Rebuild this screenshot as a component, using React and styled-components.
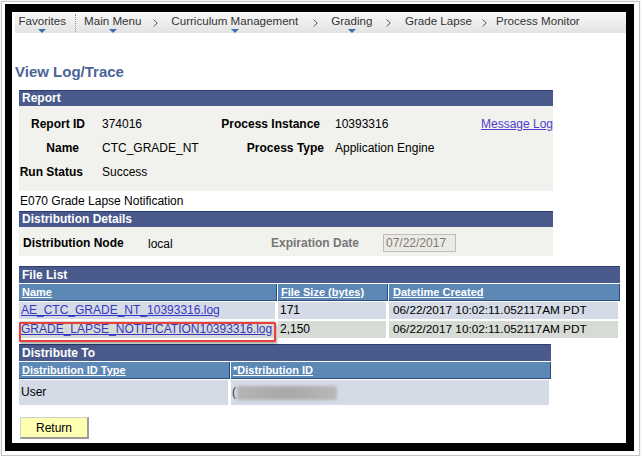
import React from 'react';
import styled, { createGlobalStyle } from 'styled-components';

const Global = createGlobalStyle`
  html, body { margin: 0; padding: 0; background: #fff; }
  body { font-family: "Liberation Sans", Arial, sans-serif; color: #000; }
  * { box-sizing: border-box; }
`;

const Frame = styled.div`
  margin: 1px 0 0 1px;
  width: 639px;
  height: 455px;
  border: 1px solid #c4c4c4;
  box-shadow: 0 0 2px rgba(0, 0, 0, 0.15);
  padding: 2px 5px 4px 3px;
  background: #fff;
  display: flex;
`;

const Screen = styled.div`
  flex: 1;
  border-style: solid;
  border-color: #000;
  border-width: 8px 8px 8px 7px;
  background: #fff;
  display: flex;
  flex-direction: column;
  overflow: hidden;
`;

const Nav = styled.nav`
  margin: 1px 0 0 3px;
  height: 20px;
  flex: none;
  background: linear-gradient(#f7f7f7, #e3e3e3);
  display: flex;
  align-items: flex-start;
  font-size: 11.6px;
  color: #333;
`;

const Crumb = styled.div`
  margin-left: ${(p) => p.$ml}px;
  display: flex;
  flex-direction: column;
  align-items: center;
  padding-top: 1px;
  line-height: 14px;
  white-space: nowrap;
`;

const Caret = styled.span`
  margin-top: 1px;
  width: 0;
  height: 0;
  border-left: 4px solid transparent;
  border-right: 4px solid transparent;
  border-top: 4px solid ${(p) => (p.$show ? '#3b6db3' : 'transparent')};
`;

const DotSep = styled.span`
  margin-left: ${(p) => p.$ml}px;
  height: 18px;
  margin-top: 1px;
  border-left: 1px dotted #9a9a9a;
`;

const ChevWrap = styled.span`
  margin-left: ${(p) => p.$ml}px;
  margin-top: 6px;
  display: flex;
`;

const Chevron = ({ ml }) => (
  <ChevWrap $ml={ml}>
    <svg width="5" height="8" viewBox="0 0 5 8">
      <path d="M0.6 0.6 L4.3 4 L0.6 7.4" fill="none" stroke="#555" strokeWidth="1" />
    </svg>
  </ChevWrap>
);

const Title = styled.h1`
  margin: 30px 0 0 3px;
  font-size: 15px;
  line-height: 18px;
  font-weight: bold;
  color: #4b6497;
`;

const Page = styled.div`
  margin: 9px 0 0 7px;
  display: flex;
  flex-direction: column;
  align-items: flex-start;
`;

const SectionHeader = styled.div`
  width: ${(p) => p.$w}px;
  height: ${(p) => p.$h}px;
  flex: none;
  background: #4a5a8c;
  border-top: 1px solid #2d3d70;
  color: #fff;
  font-weight: bold;
  font-size: 12px;
  line-height: ${(p) => p.$h - 1}px;
  padding-left: 3px;
  grid-column: 1 / -1;
`;

const ReportBody = styled.div`
  width: 534px;
  background: #f1f2ee;
  padding: 6px 0 7px;
  display: grid;
  grid-template-columns: 66px 130px 109px 157px 72px;
  grid-auto-rows: 24px;
  align-items: center;
  font-size: 12px;
`;

const Label = styled.span`
  font-weight: bold;
  text-align: right;
  white-space: nowrap;
  padding-right: ${(p) => p.$pr || 0}px;
  color: ${(p) => (p.$muted ? '#777' : '#000')};
`;

const Value = styled.span`
  white-space: nowrap;
  padding-left: ${(p) => p.$pl || 0}px;
`;

const Link = styled.a`
  color: ${(p) => p.$c || '#3636c4'};
  text-decoration: underline;
  white-space: nowrap;
  cursor: pointer;
`;

const Desc = styled.div`
  height: 20px;
  line-height: 21px;
  font-size: 12px;
  padding-left: 1px;
`;

const DistBody = styled.div`
  width: 534px;
  height: 29px;
  background: #f1f2ee;
  display: flex;
  align-items: center;
  padding: 3px 0 0 4px;
  font-size: 12px;
`;

const Slot = styled.span`
  width: ${(p) => p.$w}px;
  flex: none;
  white-space: nowrap;
  font-weight: ${(p) => (p.$bold ? 'bold' : 'normal')};
  color: ${(p) => (p.$muted ? '#777' : '#000')};
  margin-top: ${(p) => p.$mt || 0}px;
`;

const DateBox = styled.span`
  width: 73px;
  height: 18px;
  background: #edeae3;
  border: 1px solid #bdbdbd;
  color: #7c7c7c;
  font-size: 12px;
  line-height: 16px;
  padding-left: 2px;
`;

const Grid = styled.div`
  margin-top: ${(p) => p.$mt}px;
  display: grid;
  grid-template-columns: ${(p) => p.$cols};
  column-gap: 1px;
  row-gap: 1px;
  background: #fff;
`;

const ColHead = styled.div`
  height: 17px;
  background: #5b88b5;
  border-right: 1px solid #2b4a7c;
  border-bottom: 1px solid #2b4a7c;
  color: #fff;
  font-weight: bold;
  font-size: 11px;
  line-height: 16px;
  text-decoration: underline;
  padding-left: ${(p) => p.$pl || 3}px;
  white-space: nowrap;
`;

const Cell = styled.div`
  position: relative;
  height: ${(p) => p.$h || 18}px;
  background: ${(p) => (p.$alt ? '#d6dbd6' : '#d4dae6')};
  border-right: 2px solid #fff;
  border-bottom: 1px solid #fff;
  font-size: ${(p) => p.$fs || 12}px;
  line-height: ${(p) => (p.$h || 18) - 1}px;
  padding-left: ${(p) => p.$pl || 2}px;
  white-space: nowrap;
  display: flex;
  align-items: center;
`;

const Highlight = styled.span`
  position: absolute;
  left: 0;
  top: 1px;
  width: 257px;
  height: 20px;
  border: 2px solid #e8403a;
  border-radius: 1px;
  box-shadow: 1px 2px 3px rgba(0, 0, 0, 0.35);
  pointer-events: none;
`;

const Paren = styled.span`
  color: #333;
  font-size: 12px;
`;

const Blur = styled.span`
  width: 100px;
  height: 14px;
  margin-left: 1px;
  background: linear-gradient(90deg, #b4b4b4, #a9a9a9 50%, #b8b8b8);
  filter: blur(1.5px);
  border-radius: 2px;
`;

const Button = styled.button`
  margin: 11px 0 0 1px;
  width: 69px;
  height: 22px;
  background: #ffffb2;
  border-style: solid;
  border-width: 1px 2px 2px 1px;
  border-color: #cfcfcf #9c9c9c #9c9c9c #cfcfcf;
  font: 12px "Liberation Sans", Arial, sans-serif;
  color: #000;
  padding: 0;
`;

export default function App() {
  return (
    <>
      <Global />
      <Frame>
        <Screen>
          <Nav>
            <Crumb $ml={3.4}>Favorites<Caret $show /></Crumb>
            <DotSep $ml={9.4} />
            <Crumb $ml={7.6}>Main Menu<Caret $show /></Crumb>
            <Chevron ml={11.4} />
            <Crumb $ml={13.5}>Curriculum Management<Caret $show /></Crumb>
            <Chevron ml={14.4} />
            <Crumb $ml={13.5}>Grading<Caret $show /></Crumb>
            <Chevron ml={14} />
            <Crumb $ml={13.5}>Grade Lapse<Caret /></Crumb>
            <Chevron ml={10} />
            <Crumb $ml={9}>Process Monitor<Caret /></Crumb>
          </Nav>

          <Title>View Log/Trace</Title>

          <Page>
            <SectionHeader $w={534} $h={16}>Report</SectionHeader>
            <ReportBody>
              <Label>Report ID</Label>
              <Value $pl={17}>374016</Value>
              <Label $pr={4}>Process Instance</Label>
              <Value $pl={11}>10393316</Value>
              <Link $c="#4f3fd0">Message Log</Link>

              <Label $pr={6}>Name</Label>
              <Value $pl={17}>CTC_GRADE_NT</Value>
              <Label>Process Type</Label>
              <Value $pl={11}>Application Engine</Value>
              <span />

              <Label $pr={2}>Run Status</Label>
              <Value $pl={17}>Success</Value>
            </ReportBody>
            <Desc>E070 Grade Lapse Notification</Desc>

            <SectionHeader $w={534} $h={16}>Distribution Details</SectionHeader>
            <DistBody>
              <Slot $w={125} $bold>Distribution Node</Slot>
              <Slot $w={123} $mt={2}>local</Slot>
              <Slot $w={112} $bold $muted>Expiration Date</Slot>
              <DateBox>07/22/2017</DateBox>
            </DistBody>

            <Grid $mt={10} $cols="258px 110px 231px">
              <SectionHeader $w={601} $h={17}>File List</SectionHeader>
              <ColHead>Name</ColHead>
              <ColHead>File Size (bytes)</ColHead>
              <ColHead $pl={4}>Datetime Created</ColHead>

              <Cell><Link>AE_CTC_GRADE_NT_10393316.log</Link></Cell>
              <Cell>171</Cell>
              <Cell $fs={11.8} $pl={4}>06/22/2017 10:02:11.052117AM PDT</Cell>

              <Cell $alt>
                <Link>GRADE_LAPSE_NOTIFICATION10393316.log</Link>
                <Highlight />
              </Cell>
              <Cell $alt>2,150</Cell>
              <Cell $alt $fs={11.8} $pl={4}>06/22/2017 10:02:11.052117AM PDT</Cell>
            </Grid>

            <Grid $mt={5} $cols="211px 320px">
              <SectionHeader $w={532} $h={17}>Distribute To</SectionHeader>
              <ColHead>Distribution ID Type</ColHead>
              <ColHead $pl={2}>*Distribution ID</ColHead>
              <Cell $h={26}>User</Cell>
              <Cell $h={26} $pl={1}>
                <Paren>(</Paren>
                <Blur />
              </Cell>
            </Grid>

            <Button>Return</Button>
          </Page>
        </Screen>
      </Frame>
    </>
  );
}
